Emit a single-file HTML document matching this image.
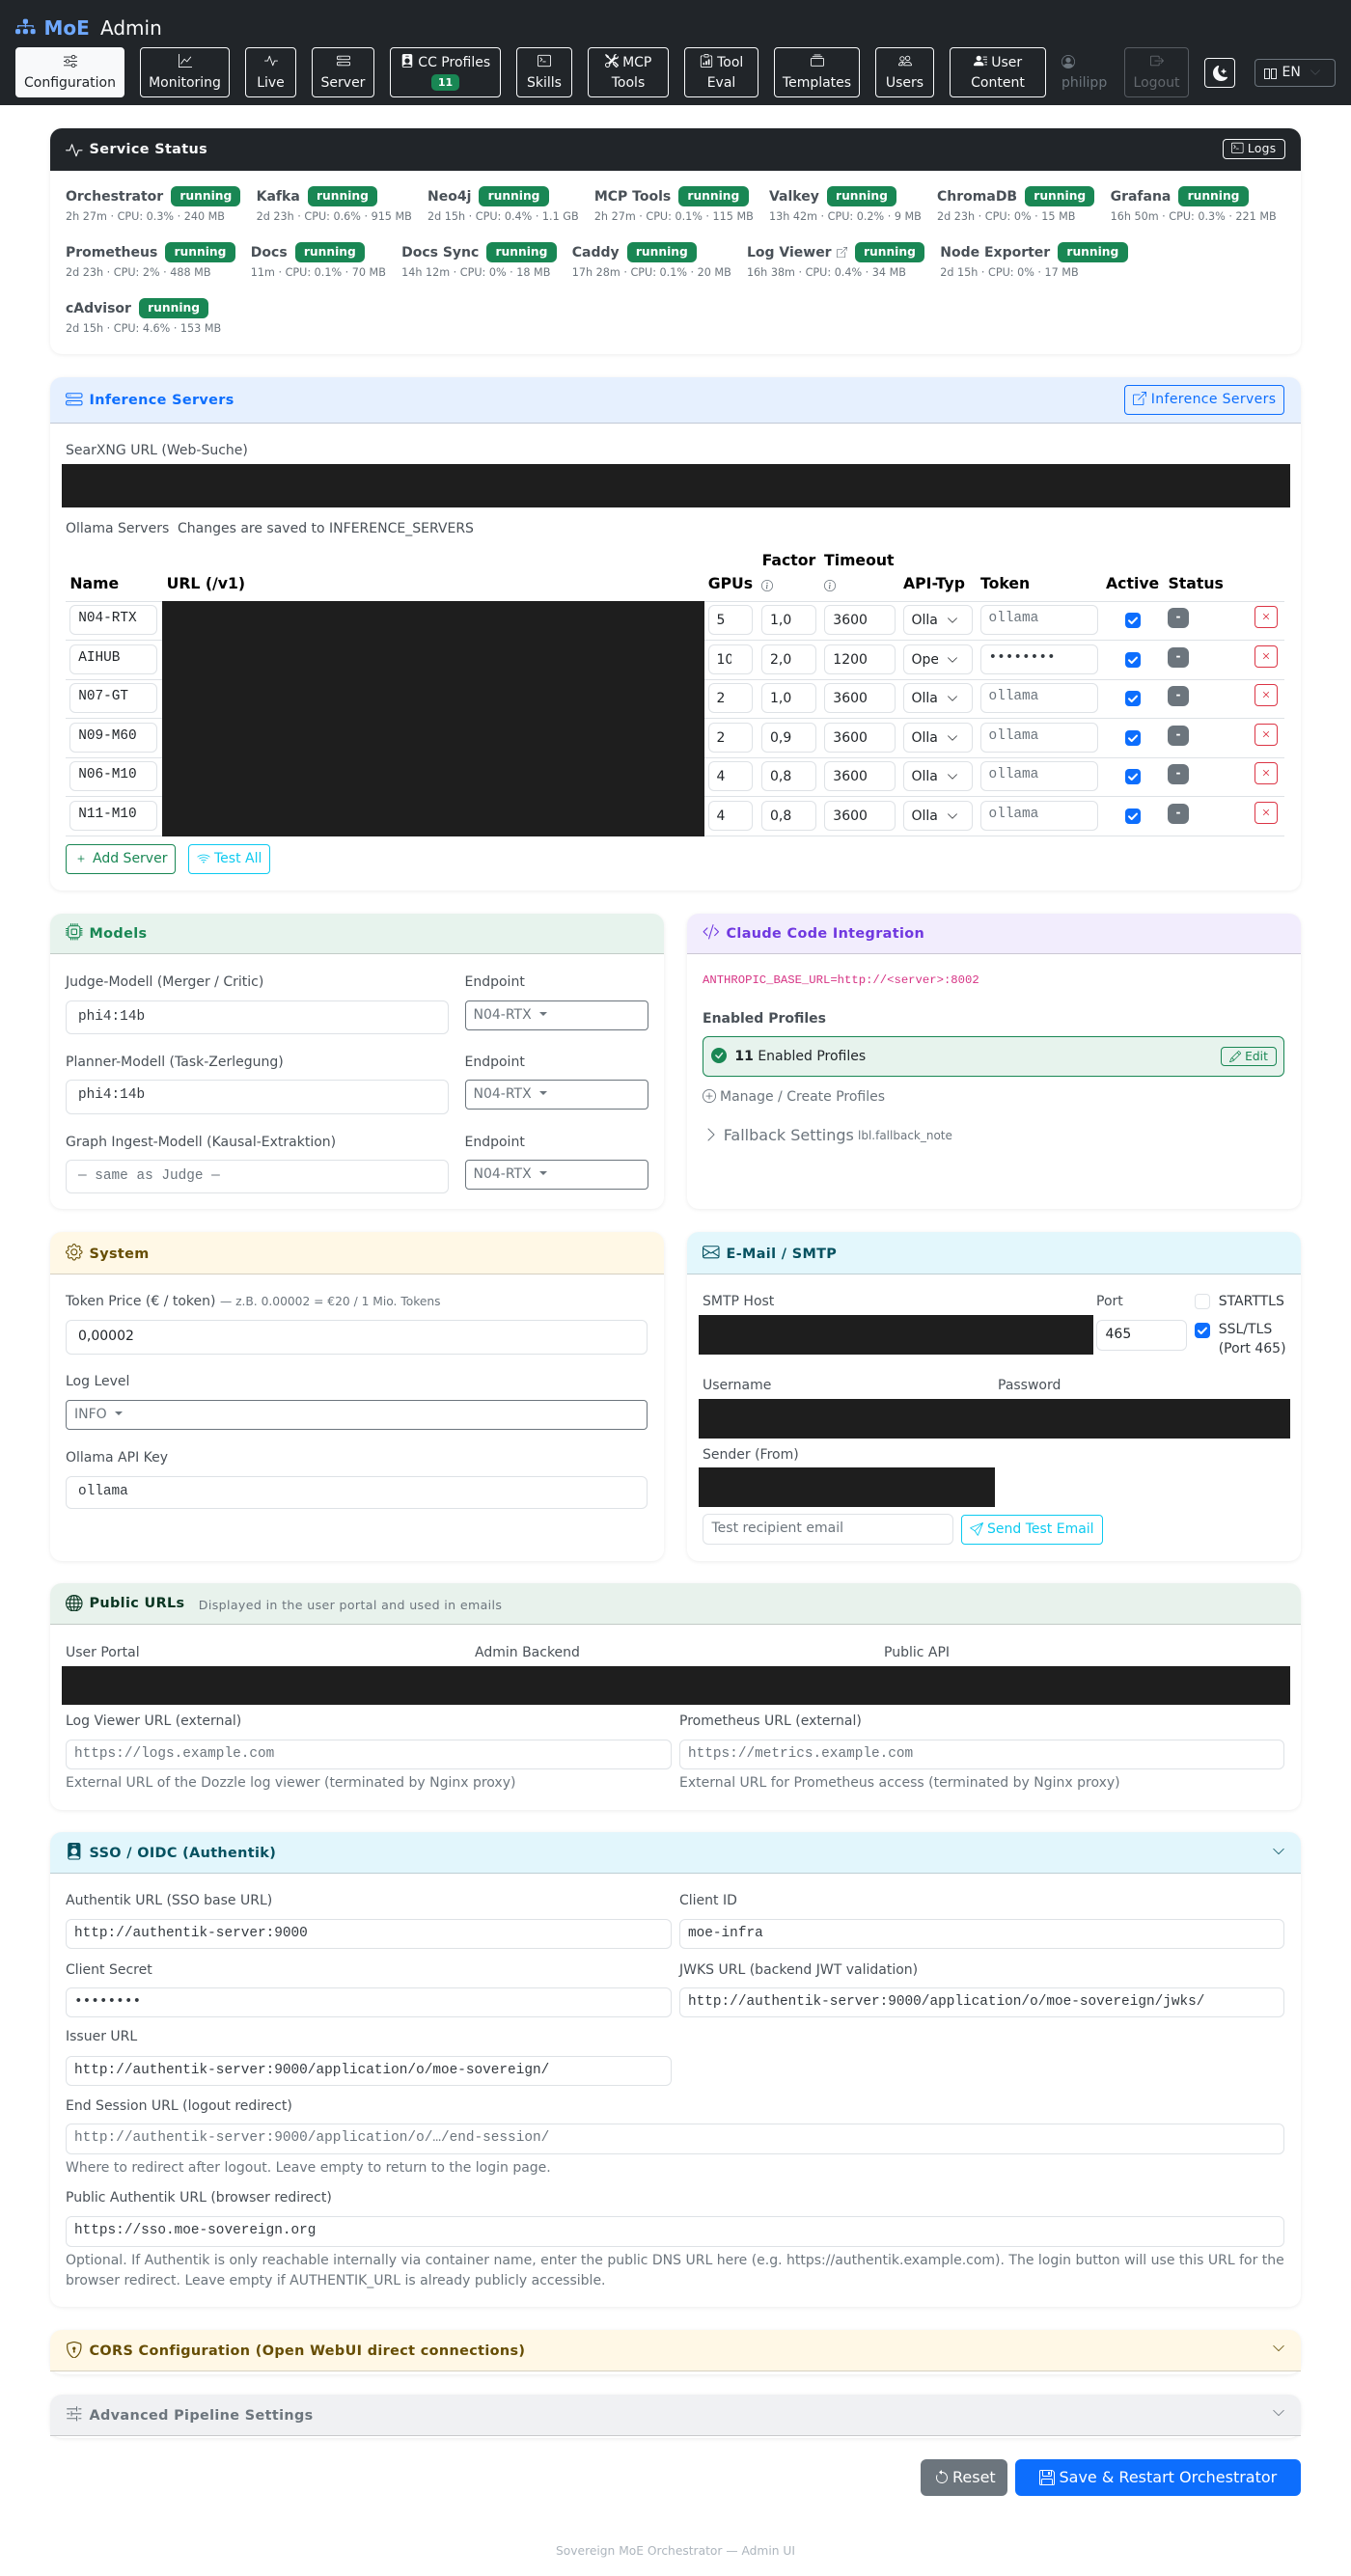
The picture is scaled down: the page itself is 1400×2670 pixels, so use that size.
<!DOCTYPE html>
<html lang="en"><head><meta charset="utf-8"><title>Sovereign MoE Admin</title>
<style>
*{box-sizing:border-box}
html,body{margin:0;padding:0;background:#fff}
body{position:relative;width:1400px;height:2670px;overflow:hidden;font-family:"DejaVu Sans",sans-serif;font-size:14px;color:#212529}
svg{fill:currentColor;display:inline-block;vertical-align:-2px}
.ab{position:absolute}
.t{position:absolute;white-space:nowrap;line-height:21px;color:#495057;margin-top:1px}
.t.h{margin-top:0}
.g{color:#6c757d}
nav{position:absolute;left:0;top:0;width:1400px;height:109px;background:#212529}
.nb{position:absolute;top:49px;height:52px;border:1px solid #f8f9fa;border-radius:4px;color:#f8f9fa;text-align:center;line-height:21px;padding:5px 0 0;white-space:nowrap}
.nb svg{vertical-align:-1px}
.nb.on{background:#f8f9fa;color:#212529}
.nb.off{border-color:#565b61;color:#63686e}
.nbg{display:inline-block;background:#198754;color:#fff;font-size:11px;font-weight:700;line-height:17px;height:17px;padding:0 6.5px;border-radius:5px;vertical-align:1px}
.card{position:absolute;background:#fff;border-radius:12px;box-shadow:0 1px 4px rgba(0,0,0,.08)}
.hd{position:absolute;left:0;right:0;top:0;border-radius:12px 12px 0 0;border-bottom:1px solid rgba(0,0,0,.16)}
.ct{position:absolute;white-space:nowrap;line-height:21px;font-size:14.4px;font-weight:700;letter-spacing:.36px}
.ti{position:absolute;width:17.6px;height:17.6px}
.ch{position:absolute;left:1318px;width:14px;height:14px}
.svc{position:absolute;left:68px;top:193px;width:1264px;display:flex;flex-wrap:wrap;column-gap:16.2px;row-gap:16px}
.it{height:42px}
.nm{display:flex;align-items:center;height:21px;white-space:nowrap;font-weight:700;color:#495057}
.nm svg{margin-left:5px}
.b{display:inline-block;background:#198754;color:#fff;font-weight:700;font-size:12.25px;line-height:21px;height:21px;padding:0 9.2px;border-radius:6px;margin-left:8px}
.sb{font-size:11.2px;line-height:17px;color:#6c757d;margin-top:2px;white-space:nowrap}
.i{position:absolute;background:#fff;border:1px solid #dee2e6;border-radius:6px;white-space:nowrap;overflow:hidden}
.m{font-family:"Liberation Mono",monospace;font-size:14.4px}
.dd{position:absolute;border:1px solid #6c757d;border-radius:4px;height:31px;color:#6c757d;line-height:29px;padding-left:8px;white-space:nowrap;background:#fff}
.dd:after{content:"";display:inline-block;margin-left:8px;vertical-align:3px;border-top:4.2px solid;border-left:4.2px solid transparent;border-right:4.2px solid transparent}
.th{position:absolute;white-space:nowrap;line-height:24px;font-size:15.7px;font-weight:700;color:#000}
.row{position:absolute;left:68px;width:1263px;height:41px;border-bottom:1px solid #dee2e6}
.row>.i{top:4px;height:31px;line-height:30px}
.c1{left:4.4px;width:91px;padding-left:7.8px;line-height:26px!important}
.c2{left:666px;width:46px;padding-left:7.5px}
.c2 span{display:inline-block;width:15px;overflow:hidden;vertical-align:top}
.c3{left:721px;width:57px;padding-left:8px}
.c4{left:786px;width:74px;padding-left:8.3px}
.c5{left:868px;width:72px;padding-left:7.5px}
.c5 span{display:inline-block;width:27px;overflow:hidden;vertical-align:top}
.c5 svg{position:absolute;left:44px;top:9px;width:12px;height:12px}
.c6{left:948px;width:122px;padding-left:7.5px;color:#6c757d;line-height:26px!important}
.cb{position:absolute;left:1098px;top:12px;width:16px;height:16px;background:#0d6efd;border-radius:4px}
.cb svg,.cb2 svg{position:absolute;left:0;top:0;width:16px;height:16px;fill:none}
.st{position:absolute;left:1142px;top:7px;width:22px;height:21px;background:#6c757d;color:#fff;border-radius:6px;text-align:center;font-size:12px;font-weight:700;line-height:19px}
.del{position:absolute;left:1232px;top:5px;width:24px;height:23px;border:1px solid #dc3545;border-radius:4px;color:#dc3545}
.del svg{position:absolute;left:4px;top:3px;width:14px;height:14px}
.blk{position:absolute;background:#1e1e1e}
.btn{position:absolute;border:1px solid;border-radius:4px;height:31px;line-height:29px;white-space:nowrap;background:#fff}
</style></head><body>

<svg style="display:none">
<symbol id="diagram" viewBox="0 0 16 16"><path d="M6 3.5A1.5 1.5 0 0 1 7.5 2h1A1.5 1.5 0 0 1 10 3.5v1A1.5 1.5 0 0 1 8.5 6v1H14a.5.5 0 0 1 .5.5v1a.5.5 0 0 1-1 0V8h-5v.5a.5.5 0 0 1-1 0V8h-5v.5a.5.5 0 0 1-1 0v-1A.5.5 0 0 1 2 7h5.5V6A1.5 1.5 0 0 1 6 4.5zm-6 8A1.5 1.5 0 0 1 1.5 10h1A1.5 1.5 0 0 1 4 11.5v1A1.5 1.5 0 0 1 2.5 14h-1A1.5 1.5 0 0 1 0 12.5zm6 0A1.5 1.5 0 0 1 7.5 10h1a1.5 1.5 0 0 1 1.5 1.5v1A1.5 1.5 0 0 1 8.5 14h-1A1.5 1.5 0 0 1 6 12.5zm6 0a1.5 1.5 0 0 1 1.5-1.5h1a1.5 1.5 0 0 1 1.5 1.5v1a1.5 1.5 0 0 1-1.5 1.5h-1a1.5 1.5 0 0 1-1.5-1.5z"/></symbol>
<symbol id="sliders" viewBox="0 0 16 16"><path fill-rule="evenodd" d="M11.5 2a1.5 1.5 0 1 0 0 3 1.5 1.5 0 0 0 0-3M9.05 3a2.5 2.5 0 0 1 4.9 0H16v1h-2.05a2.5 2.5 0 0 1-4.9 0H0V3zM4.5 7a1.5 1.5 0 1 0 0 3 1.5 1.5 0 0 0 0-3M2.05 8a2.5 2.5 0 0 1 4.9 0H16v1H6.95a2.5 2.5 0 0 1-4.9 0H0V8zm9.45 4a1.5 1.5 0 1 0 0 3 1.5 1.5 0 0 0 0-3m-2.45 1a2.5 2.5 0 0 1 4.9 0H16v1h-2.05a2.5 2.5 0 0 1-4.9 0H0v-1z"/></symbol>
<symbol id="graph" viewBox="0 0 16 16"><path fill-rule="evenodd" d="M0 0h1v15h15v1H0zm14.817 3.113a.5.5 0 0 1 .07.704l-4.5 5.5a.5.5 0 0 1-.74.037L7.06 6.767l-3.656 5.027a.5.5 0 0 1-.808-.588l4-5.5a.5.5 0 0 1 .758-.06l2.609 2.61 4.15-5.073a.5.5 0 0 1 .704-.07"/></symbol>
<symbol id="activity" viewBox="0 0 16 16"><path fill-rule="evenodd" d="M6 2a.5.5 0 0 1 .47.33L10 12.036l1.53-4.208A.5.5 0 0 1 12 7.5h3.5a.5.5 0 0 1 0 1h-3.15l-1.88 5.17a.5.5 0 0 1-.94 0L6 3.964 4.47 8.171A.5.5 0 0 1 4 8.5H.5a.5.5 0 0 1 0-1h3.15l1.88-5.17A.5.5 0 0 1 6 2"/></symbol>
<symbol id="hdd" viewBox="0 0 16 16"><path d="M14 10a1 1 0 0 1 1 1v1a1 1 0 0 1-1 1H2a1 1 0 0 1-1-1v-1a1 1 0 0 1 1-1zM2 9a2 2 0 0 0-2 2v1a2 2 0 0 0 2 2h12a2 2 0 0 0 2-2v-1a2 2 0 0 0-2-2z"/><path d="M5 11.5a.5.5 0 1 1-1 0 .5.5 0 0 1 1 0m-2 0a.5.5 0 1 1-1 0 .5.5 0 0 1 1 0M14 3a1 1 0 0 1 1 1v1a1 1 0 0 1-1 1H2a1 1 0 0 1-1-1V4a1 1 0 0 1 1-1zM2 2a2 2 0 0 0-2 2v1a2 2 0 0 0 2 2h12a2 2 0 0 0 2-2V4a2 2 0 0 0-2-2z"/><path d="M5 4.5a.5.5 0 1 1-1 0 .5.5 0 0 1 1 0m-2 0a.5.5 0 1 1-1 0 .5.5 0 0 1 1 0"/></symbol>
<symbol id="badge" viewBox="0 0 16 16"><path d="M2 2a2 2 0 0 1 2-2h8a2 2 0 0 1 2 2v12a2 2 0 0 1-2 2H4a2 2 0 0 1-2-2zm4.5 0a.5.5 0 0 0 0 1h3a.5.5 0 0 0 0-1zM8 11a3 3 0 1 0 0-6 3 3 0 0 0 0 6m5 2.755C12.146 12.825 10.623 12 8 12s-4.146.826-5 1.755V14a1 1 0 0 0 1 1h8a1 1 0 0 0 1-1z"/></symbol>
<symbol id="terminal" viewBox="0 0 16 16"><path d="M6 9a.5.5 0 0 1 .5-.5h3a.5.5 0 0 1 0 1h-3A.5.5 0 0 1 6 9M3.854 4.146a.5.5 0 1 0-.708.708L4.793 6.5 3.146 8.146a.5.5 0 1 0 .708.708l2-2a.5.5 0 0 0 0-.708z"/><path d="M2 1a2 2 0 0 0-2 2v10a2 2 0 0 0 2 2h12a2 2 0 0 0 2-2V3a2 2 0 0 0-2-2zm12 1a1 1 0 0 1 1 1v10a1 1 0 0 1-1 1H2a1 1 0 0 1-1-1V3a1 1 0 0 1 1-1z"/></symbol>
<symbol id="tools" viewBox="0 0 16 16"><path d="M1 0 0 1l2.2 3.081a1 1 0 0 0 .815.419h.07a1 1 0 0 1 .708.293l2.675 2.675-2.617 2.654A3.003 3.003 0 0 0 0 13a3 3 0 1 0 5.878-.851l2.654-2.617.968.968-.305.914a1 1 0 0 0 .242 1.023l3.27 3.27a.997.997 0 0 0 1.414 0l1.586-1.586a.997.997 0 0 0 0-1.414l-3.27-3.27a1 1 0 0 0-1.023-.242L10.5 9.5l-.96-.96 2.68-2.643A3.005 3.005 0 0 0 16 3q0-.405-.102-.777l-2.14 2.141L12 4l-.364-1.757L13.777.102a3 3 0 0 0-3.675 3.68L7.462 6.46 4.793 3.793a1 1 0 0 1-.293-.707v-.071a1 1 0 0 0-.419-.814zm9.646 10.646a.5.5 0 0 1 .708 0l2.914 2.915a.5.5 0 0 1-.707.707l-2.915-2.914a.5.5 0 0 1 0-.708M3 11l.471.242.529.026.287.445.445.287.026.529L5 13l-.242.471-.026.529-.445.287-.287.445-.529.026L3 15l-.471-.242L2 14.732l-.287-.445L1.268 14l-.026-.529L1 13l.242-.471.026-.529.445-.287.287-.445.529-.026z"/></symbol>
<symbol id="clip" viewBox="0 0 16 16"><path d="M4 11a1 1 0 1 1 2 0v1a1 1 0 1 1-2 0zm6-4a1 1 0 1 1 2 0v5a1 1 0 1 1-2 0zM7 9a1 1 0 0 1 2 0v3a1 1 0 1 1-2 0z"/><path d="M4 1.5H3a2 2 0 0 0-2 2V14a2 2 0 0 0 2 2h10a2 2 0 0 0 2-2V3.5a2 2 0 0 0-2-2h-1v1h1a1 1 0 0 1 1 1V14a1 1 0 0 1-1 1H3a1 1 0 0 1-1-1V3.5a1 1 0 0 1 1-1h1z"/><path d="M9.5 1a.5.5 0 0 1 .5.5v1a.5.5 0 0 1-.5.5h-3a.5.5 0 0 1-.5-.5v-1a.5.5 0 0 1 .5-.5zm-3-1A1.5 1.5 0 0 0 5 1.5v1A1.5 1.5 0 0 0 6.5 4h3A1.5 1.5 0 0 0 11 2.5v-1A1.5 1.5 0 0 0 9.5 0z"/></symbol>
<symbol id="coll" viewBox="0 0 16 16"><path d="M2.5 3.5a.5.5 0 0 1 0-1h11a.5.5 0 0 1 0 1zm2-2a.5.5 0 0 1 0-1h7a.5.5 0 0 1 0 1zM0 13a1.5 1.5 0 0 0 1.5 1.5h13A1.5 1.5 0 0 0 16 13V6a1.5 1.5 0 0 0-1.5-1.5h-13A1.5 1.5 0 0 0 0 6zm1.5.5A.5.5 0 0 1 1 13V6a.5.5 0 0 1 .5-.5h13a.5.5 0 0 1 .5.5v7a.5.5 0 0 1-.5.5z"/></symbol>
<symbol id="people" viewBox="0 0 16 16"><path d="M15 14s1 0 1-1-1-4-5-4-5 3-5 4 1 1 1 1zm-7.978-1L7 12.996c.001-.264.167-1.03.76-1.72C8.312 10.629 9.282 10 11 10c1.717 0 2.687.63 3.24 1.276.593.69.758 1.457.76 1.72l-.008.002-.014.002zM11 7a2 2 0 1 0 0-4 2 2 0 0 0 0 4m3-2a3 3 0 1 1-6 0 3 3 0 0 1 6 0M6.936 9.28a6 6 0 0 0-1.23-.247A7 7 0 0 0 5 9c-4 0-5 3-5 4q0 1 1 1h4.216A2.24 2.24 0 0 1 5 13c0-1.01.377-2.042 1.09-2.904.243-.294.526-.569.846-.816M4.92 10A5.5 5.5 0 0 0 4 13H1c0-.26.164-1.03.76-1.724.545-.636 1.492-1.256 3.16-1.275ZM1.5 5.5a3 3 0 1 1 6 0 3 3 0 0 1-6 0m3-2a2 2 0 1 0 0 4 2 2 0 0 0 0-4"/></symbol>
<symbol id="plines" viewBox="0 0 16 16"><path d="M6 8a3 3 0 1 0 0-6 3 3 0 0 0 0 6m-5 6s-1 0-1-1 1-4 6-4 6 3 6 4-1 1-1 1zM11 3.5a.5.5 0 0 1 .5-.5h4a.5.5 0 0 1 0 1h-4a.5.5 0 0 1-.5-.5m.5 2.5a.5.5 0 0 0 0 1h4a.5.5 0 0 0 0-1zm2 3a.5.5 0 0 0 0 1h2a.5.5 0 0 0 0-1zm0 3a.5.5 0 0 0 0 1h2a.5.5 0 0 0 0-1z"/></symbol>
<symbol id="pcircle" viewBox="0 0 16 16"><path d="M11 6a3 3 0 1 1-6 0 3 3 0 0 1 6 0"/><path fill-rule="evenodd" d="M0 8a8 8 0 1 1 16 0A8 8 0 0 1 0 8m8-7a7 7 0 0 0-5.468 11.37C3.242 11.226 4.805 10 8 10s4.757 1.225 5.468 2.37A7 7 0 0 0 8 1"/></symbol>
<symbol id="logout" viewBox="0 0 16 16"><path fill-rule="evenodd" d="M10 12.5a.5.5 0 0 1-.5.5h-8a.5.5 0 0 1-.5-.5v-9a.5.5 0 0 1 .5-.5h8a.5.5 0 0 1 .5.5v2a.5.5 0 0 0 1 0v-2A1.5 1.5 0 0 0 9.5 2h-8A1.5 1.5 0 0 0 0 3.5v9A1.5 1.5 0 0 0 1.5 14h8a1.5 1.5 0 0 0 1.5-1.5v-2a.5.5 0 0 0-1 0z"/><path fill-rule="evenodd" d="M15.854 8.354a.5.5 0 0 0 0-.708l-3-3a.5.5 0 0 0-.708.708L14.293 7.5H5.5a.5.5 0 0 0 0 1h8.793l-2.147 2.146a.5.5 0 0 0 .708.708z"/></symbol>
<symbol id="moon" viewBox="0 0 16 16"><path d="M6 .278a.77.77 0 0 1 .08.858 7.2 7.2 0 0 0-.878 3.46c0 4.021 3.278 7.277 7.318 7.277q.792-.001 1.533-.16a.79.79 0 0 1 .81.316.73.73 0 0 1-.031.893A8.35 8.35 0 0 1 8.344 16C3.734 16 0 12.286 0 7.71 0 4.266 2.114 1.312 5.124.06A.75.75 0 0 1 6 .278"/><path d="M10.794 3.148a.217.217 0 0 1 .412 0l.387 1.162c.173.518.579.924 1.097 1.097l1.162.387a.217.217 0 0 1 0 .412l-1.162.387a1.73 1.73 0 0 0-1.097 1.097l-.387 1.162a.217.217 0 0 1-.412 0l-.387-1.162A1.73 1.73 0 0 0 9.31 6.593l-1.162-.387a.217.217 0 0 1 0-.412l1.162-.387a1.73 1.73 0 0 0 1.097-1.097z"/></symbol>
<symbol id="ext" viewBox="0 0 16 16"><path fill-rule="evenodd" d="M8.636 3.5a.5.5 0 0 0-.5-.5H1.5A1.5 1.5 0 0 0 0 4.5v10A1.5 1.5 0 0 0 1.5 16h10a1.5 1.5 0 0 0 1.5-1.5V7.864a.5.5 0 0 0-1 0V14.5a.5.5 0 0 1-.5.5h-10a.5.5 0 0 1-.5-.5v-10a.5.5 0 0 1 .5-.5h6.636a.5.5 0 0 0 .5-.5"/><path fill-rule="evenodd" d="M16 .5a.5.5 0 0 0-.5-.5h-5a.5.5 0 0 0 0 1h3.793L6.146 9.146a.5.5 0 1 0 .708.708L15 1.707V5.5a.5.5 0 0 0 1 0z"/></symbol>
<symbol id="info" viewBox="0 0 16 16"><path d="M8 15A7 7 0 1 1 8 1a7 7 0 0 1 0 14m0 1A8 8 0 1 0 8 0a8 8 0 0 0 0 16"/><path d="m8.93 6.588-2.29.287-.082.38.45.083c.294.07.352.176.288.469l-.738 3.468c-.194.897.105 1.319.808 1.319.545 0 1.178-.252 1.465-.598l.088-.416c-.2.176-.492.246-.686.246-.275 0-.375-.193-.304-.533zM9 4.5a1 1 0 1 1-2 0 1 1 0 0 1 2 0"/></symbol>
<symbol id="x" viewBox="0 0 16 16"><path d="M4.646 4.646a.5.5 0 0 1 .708 0L8 7.293l2.646-2.647a.5.5 0 0 1 .708.708L8.707 8l2.647 2.646a.5.5 0 0 1-.708.708L8 8.707l-2.646 2.647a.5.5 0 0 1-.708-.708L7.293 8 4.646 5.354a.5.5 0 0 1 0-.708"/></symbol>
<symbol id="wifi" viewBox="0 0 16 16"><path d="M15.384 6.115a.485.485 0 0 0-.047-.736A12.44 12.44 0 0 0 8 3C5.259 3 2.723 3.882.663 5.379a.485.485 0 0 0-.048.736.52.52 0 0 0 .668.05A11.45 11.45 0 0 1 8 4c2.507 0 4.827.802 6.716 2.164.205.148.49.13.668-.049"/><path d="M13.229 8.271a.482.482 0 0 0-.063-.745A9.46 9.46 0 0 0 8 6c-1.905 0-3.68.56-5.166 1.526a.48.48 0 0 0-.063.745.525.525 0 0 0 .652.065A8.46 8.46 0 0 1 8 7a8.46 8.46 0 0 1 4.576 1.336c.206.132.48.108.653-.065m-2.183 2.183c.226-.226.185-.605-.1-.75A6.5 6.5 0 0 0 8 9c-1.06 0-2.062.254-2.946.704-.285.145-.326.524-.1.75l.015.015c.16.16.407.19.611.09A5.5 5.5 0 0 1 8 10c.868 0 1.69.201 2.42.56.203.1.45.07.61-.091zM9.06 12.44c.196-.196.198-.52-.04-.66A2 2 0 0 0 8 11.5a2 2 0 0 0-1.02.28c-.238.14-.236.464-.04.66l.706.706a.5.5 0 0 0 .707 0l.707-.707z"/></symbol>
<symbol id="cpu" viewBox="0 0 16 16"><path d="M5 0a.5.5 0 0 1 .5.5V2h1V.5a.5.5 0 0 1 1 0V2h1V.5a.5.5 0 0 1 1 0V2h1V.5a.5.5 0 0 1 1 0V2A2.5 2.5 0 0 1 14 4.5h1.5a.5.5 0 0 1 0 1H14v1h1.5a.5.5 0 0 1 0 1H14v1h1.5a.5.5 0 0 1 0 1H14v1h1.5a.5.5 0 0 1 0 1H14a2.5 2.5 0 0 1-2.5 2.5v1.5a.5.5 0 0 1-1 0V14h-1v1.5a.5.5 0 0 1-1 0V14h-1v1.5a.5.5 0 0 1-1 0V14h-1v1.5a.5.5 0 0 1-1 0V14A2.5 2.5 0 0 1 2 11.5H.5a.5.5 0 0 1 0-1H2v-1H.5a.5.5 0 0 1 0-1H2v-1H.5a.5.5 0 0 1 0-1H2v-1H.5a.5.5 0 0 1 0-1H2A2.5 2.5 0 0 1 4.5 2V.5A.5.5 0 0 1 5 0m-.5 3A1.5 1.5 0 0 0 3 4.5v7A1.5 1.5 0 0 0 4.5 13h7a1.5 1.5 0 0 0 1.5-1.5v-7A1.5 1.5 0 0 0 11.5 3zM5 6.5A1.5 1.5 0 0 1 6.5 5h3A1.5 1.5 0 0 1 11 6.5v3A1.5 1.5 0 0 1 9.5 11h-3A1.5 1.5 0 0 1 5 9.5zM6.5 6a.5.5 0 0 0-.5.5v3a.5.5 0 0 0 .5.5h3a.5.5 0 0 0 .5-.5v-3a.5.5 0 0 0-.5-.5z"/></symbol>
<symbol id="code" viewBox="0 0 16 16"><path d="M10.478 1.647a.5.5 0 1 0-.956-.294l-4 13a.5.5 0 0 0 .956.294zM4.854 4.146a.5.5 0 0 1 0 .708L1.707 8l3.147 3.146a.5.5 0 0 1-.708.708l-3.5-3.5a.5.5 0 0 1 0-.708l3.5-3.5a.5.5 0 0 1 .708 0m6.292 0a.5.5 0 0 0 0 .708L14.293 8l-3.147 3.146a.5.5 0 0 0 .708.708l3.5-3.5a.5.5 0 0 0 0-.708l-3.5-3.5a.5.5 0 0 0-.708 0"/></symbol>
<symbol id="gear" viewBox="0 0 16 16"><path d="M8 4.754a3.246 3.246 0 1 0 0 6.492 3.246 3.246 0 0 0 0-6.492M5.754 8a2.246 2.246 0 1 1 4.492 0 2.246 2.246 0 0 1-4.492 0"/><path d="M9.796 1.343c-.527-1.79-3.065-1.79-3.592 0l-.094.319a.873.873 0 0 1-1.255.52l-.292-.16c-1.64-.892-3.433.902-2.54 2.541l.159.292a.873.873 0 0 1-.52 1.255l-.319.094c-1.79.527-1.79 3.065 0 3.592l.319.094a.873.873 0 0 1 .52 1.255l-.16.292c-.892 1.64.901 3.434 2.541 2.54l.292-.159a.873.873 0 0 1 1.255.52l.094.319c.527 1.79 3.065 1.79 3.592 0l.094-.319a.873.873 0 0 1 1.255-.52l.292.16c1.64.893 3.434-.902 2.54-2.541l-.159-.292a.873.873 0 0 1 .52-1.255l.319-.094c1.79-.527 1.79-3.065 0-3.592l-.319-.094a.873.873 0 0 1-.52-1.255l.16-.292c.893-1.64-.902-3.433-2.541-2.54l-.292.159a.873.873 0 0 1-1.255-.52zm-2.633.283c.246-.835 1.428-.835 1.674 0l.094.319a1.873 1.873 0 0 0 2.693 1.115l.291-.16c.764-.415 1.6.42 1.184 1.185l-.159.292a1.873 1.873 0 0 0 1.116 2.692l.318.094c.835.246.835 1.428 0 1.674l-.319.094a1.873 1.873 0 0 0-1.115 2.693l.16.291c.415.764-.42 1.6-1.185 1.184l-.291-.159a1.873 1.873 0 0 0-2.693 1.116l-.094.318c-.246.835-1.428.835-1.674 0l-.094-.319a1.873 1.873 0 0 0-2.692-1.115l-.292.16c-.764.415-1.6-.42-1.184-1.185l.159-.291A1.873 1.873 0 0 0 1.945 8.93l-.319-.094c-.835-.246-.835-1.428 0-1.674l.319-.094A1.873 1.873 0 0 0 3.06 4.377l-.16-.292c-.415-.764.42-1.6 1.185-1.184l.292.159a1.873 1.873 0 0 0 2.692-1.115z"/></symbol>
<symbol id="env" viewBox="0 0 16 16"><path d="M0 4a2 2 0 0 1 2-2h12a2 2 0 0 1 2 2v8a2 2 0 0 1-2 2H2a2 2 0 0 1-2-2zm2-1a1 1 0 0 0-1 1v.217l7 4.2 7-4.2V4a1 1 0 0 0-1-1zm13 2.383-4.708 2.825L15 11.105zm-.034 6.876-5.64-3.471L8 9.583l-1.326-.795-5.64 3.47A1 1 0 0 0 2 13h12a1 1 0 0 0 .966-.741M1 11.105l4.708-2.897L1 5.383z"/></symbol>
<symbol id="globe" viewBox="0 0 16 16"><path d="M0 8a8 8 0 1 1 16 0A8 8 0 0 1 0 8m7.5-6.923c-.67.204-1.335.82-1.887 1.855A8 8 0 0 0 5.145 4H7.5zM4.09 4a9.3 9.3 0 0 1 .64-1.539 7 7 0 0 1 .597-.933A7.03 7.03 0 0 0 2.255 4zm-.582 3.5c.03-.877.138-1.718.312-2.5H1.674a7 7 0 0 0-.656 2.5zM4.847 5a12.5 12.5 0 0 0-.338 2.5H7.5V5zM8.5 5v2.5h2.99a12.5 12.5 0 0 0-.337-2.5zM4.51 8.5a12.5 12.5 0 0 0 .337 2.5H7.5V8.5zm3.99 0V11h2.653c.187-.765.306-1.608.338-2.5zM5.145 12q.208.58.468 1.068c.552 1.035 1.218 1.65 1.887 1.855V12zm.182 2.472a7 7 0 0 1-.597-.933A9.3 9.3 0 0 1 4.09 12H2.255a7 7 0 0 0 3.072 2.472M3.82 11a13.7 13.7 0 0 1-.312-2.5h-2.49c.062.89.291 1.733.656 2.5zm6.853 3.472A7 7 0 0 0 13.745 12H11.91a9.3 9.3 0 0 1-.64 1.539 7 7 0 0 1-.597.933M8.5 12v2.923c.67-.204 1.335-.82 1.887-1.855q.26-.487.468-1.068zm3.68-1h2.146c.365-.767.594-1.61.656-2.5h-2.49a13.7 13.7 0 0 1-.312 2.5m2.802-3.5a7 7 0 0 0-.656-2.5H12.18c.174.782.282 1.623.312 2.5zM11.27 2.461c.247.464.462.98.64 1.539h1.835a7 7 0 0 0-3.072-2.472c.218.284.418.598.597.933M10.855 4a8 8 0 0 0-.468-1.068C9.835 1.897 9.17 1.282 8.5 1.077V4z"/></symbol>
<symbol id="shield" viewBox="0 0 16 16"><path d="M5.338 1.59a61 61 0 0 0-2.837.856.48.48 0 0 0-.328.39c-.554 4.157.726 7.19 2.253 9.188a10.7 10.7 0 0 0 2.287 2.233c.346.244.652.42.893.533q.18.085.293.118a1 1 0 0 0 .101.025 1 1 0 0 0 .1-.025q.114-.034.294-.118c.24-.113.547-.29.893-.533a10.7 10.7 0 0 0 2.287-2.233c1.527-1.997 2.807-5.031 2.253-9.188a.48.48 0 0 0-.328-.39c-.651-.213-1.75-.56-2.837-.855C9.552 1.29 8.531 1.067 8 1.067c-.53 0-1.552.223-2.662.524zM5.072.56C6.157.265 7.31 0 8 0s1.843.265 2.928.56c1.11.3 2.229.655 2.887.87a1.54 1.54 0 0 1 1.044 1.262c.596 4.477-.787 7.795-2.465 9.99a11.8 11.8 0 0 1-2.517 2.453 7 7 0 0 1-1.048.625c-.28.132-.581.24-.829.24s-.548-.108-.829-.24a7 7 0 0 1-1.048-.625 11.8 11.8 0 0 1-2.517-2.453C1.928 10.487.545 7.169 1.141 2.692A1.54 1.54 0 0 1 2.185 1.43 63 63 0 0 1 5.072.56"/><path d="M9.5 6.5a1.5 1.5 0 0 1-1 1.415l.385 1.99a.5.5 0 0 1-.491.595h-.788a.5.5 0 0 1-.49-.595l.384-1.99a1.5 1.5 0 1 1 2-1.415"/></symbol>
<symbol id="sl2" viewBox="0 0 16 16"><path d="M10.5 1a.5.5 0 0 1 .5.5v4a.5.5 0 0 1-1 0V4H1.5a.5.5 0 0 1 0-1H10V1.5a.5.5 0 0 1 .5-.5M12 3.5a.5.5 0 0 1 .5-.5h2a.5.5 0 0 1 0 1h-2a.5.5 0 0 1-.5-.5m-6.5 2A.5.5 0 0 1 6 6v1.5h8.5a.5.5 0 0 1 0 1H6V10a.5.5 0 0 1-1 0V6a.5.5 0 0 1 .5-.5M1 8a.5.5 0 0 1 .5-.5h2a.5.5 0 0 1 0 1h-2A.5.5 0 0 1 1 8m9.5 2a.5.5 0 0 1 .5.5v4a.5.5 0 0 1-1 0V13H1.5a.5.5 0 0 1 0-1H10v-1.5a.5.5 0 0 1 .5-.5m1.5 2.5a.5.5 0 0 1 .5-.5h2a.5.5 0 0 1 0 1h-2a.5.5 0 0 1-.5-.5"/></symbol>
<symbol id="pencil" viewBox="0 0 16 16"><path d="M12.146.146a.5.5 0 0 1 .708 0l3 3a.5.5 0 0 1 0 .708l-10 10a.5.5 0 0 1-.168.11l-5 2a.5.5 0 0 1-.65-.65l2-5a.5.5 0 0 1 .11-.168zM11.207 2.5 13.5 4.793 14.793 3.5 12.5 1.207zm1.586 3L10.5 3.207 4 9.707V10h.5a.5.5 0 0 1 .5.5v.5h.5a.5.5 0 0 1 .5.5v.5h.293zm-9.761 5.175-.106.106-1.528 3.821 3.821-1.528.106-.106A.5.5 0 0 1 5 12.5V12h-.5a.5.5 0 0 1-.5-.5V11h-.5a.5.5 0 0 1-.468-.325"/></symbol>
<symbol id="check" viewBox="0 0 16 16"><path d="M16 8A8 8 0 1 1 0 8a8 8 0 0 1 16 0m-3.97-3.03a.75.75 0 0 0-1.08.022L7.477 9.417 5.384 7.323a.75.75 0 0 0-1.06 1.06L6.97 11.03a.75.75 0 0 0 1.079-.02l3.992-4.99a.75.75 0 0 0-.01-1.05z"/></symbol>
<symbol id="plusc" viewBox="0 0 16 16"><path d="M8 15A7 7 0 1 1 8 1a7 7 0 0 1 0 14m0 1A8 8 0 1 0 8 0a8 8 0 0 0 0 16"/><path d="M8 4a.5.5 0 0 1 .5.5v3h3a.5.5 0 0 1 0 1h-3v3a.5.5 0 0 1-1 0v-3h-3a.5.5 0 0 1 0-1h3v-3A.5.5 0 0 1 8 4"/></symbol>
<symbol id="plus" viewBox="0 0 16 16"><path d="M8 4a.5.5 0 0 1 .5.5v3h3a.5.5 0 0 1 0 1h-3v3a.5.5 0 0 1-1 0v-3h-3a.5.5 0 0 1 0-1h3v-3A.5.5 0 0 1 8 4"/></symbol>
<symbol id="chevd" viewBox="0 0 16 16"><path fill-rule="evenodd" d="M1.646 4.646a.5.5 0 0 1 .708 0L8 10.293l5.646-5.647a.5.5 0 0 1 .708.708l-6 6a.5.5 0 0 1-.708 0l-6-6a.5.5 0 0 1 0-.708"/></symbol>
<symbol id="chevr" viewBox="0 0 16 16"><path fill-rule="evenodd" d="M4.646 1.646a.5.5 0 0 1 .708 0l6 6a.5.5 0 0 1 0 .708l-6 6a.5.5 0 0 1-.708-.708L10.293 8 4.646 2.354a.5.5 0 0 1 0-.708"/></symbol>
<symbol id="send" viewBox="0 0 16 16"><path d="M15.854.146a.5.5 0 0 1 .11.54l-5.819 14.547a.75.75 0 0 1-1.329.124l-3.178-4.995L.643 7.184a.75.75 0 0 1 .124-1.33L15.314.037a.5.5 0 0 1 .54.11ZM6.636 10.07l2.761 4.338L14.13 2.576zm6.787-8.201L1.591 6.602l4.339 2.76z"/></symbol>
<symbol id="reset" viewBox="0 0 16 16"><path fill-rule="evenodd" d="M8 3a5 5 0 1 1-4.546 2.914.5.5 0 0 0-.908-.417A6 6 0 1 0 8 2z"/><path d="M8 4.466V.534a.25.25 0 0 0-.41-.192L5.23 2.308a.25.25 0 0 0 0 .384l2.36 1.966A.25.25 0 0 0 8 4.466"/></symbol>
<symbol id="floppy" viewBox="0 0 16 16"><path d="M11 2H9v3h2z"/><path d="M1.5 0h11.586a1.5 1.5 0 0 1 1.06.44l1.415 1.414A1.5 1.5 0 0 1 16 2.914V14.5a1.5 1.5 0 0 1-1.5 1.5h-13A1.5 1.5 0 0 1 0 14.5v-13A1.5 1.5 0 0 1 1.5 0M1 1.5v13a.5.5 0 0 0 .5.5H2v-4.5A1.5 1.5 0 0 1 3.5 9h9a1.5 1.5 0 0 1 1.5 1.5V15h.5a.5.5 0 0 0 .5-.5V2.914a.5.5 0 0 0-.146-.353l-1.415-1.415A.5.5 0 0 0 13.086 1H13v4.5A1.5 1.5 0 0 1 11.5 7h-7A1.5 1.5 0 0 1 3 5.5V1H1.5a.5.5 0 0 0-.5.5m3 4a.5.5 0 0 0 .5.5h7a.5.5 0 0 0 .5-.5V1H4zM3 15h10v-4.5a.5.5 0 0 0-.5-.5h-9a.5.5 0 0 0-.5.5z"/></symbol>
<symbol id="tick" viewBox="0 0 16 16"><path d="M4 8.3l2.7 2.7L12 5.6" fill="none" stroke="#fff" stroke-width="2" stroke-linecap="round" stroke-linejoin="round"/></symbol>
</svg>

<nav>
<svg class="ab" style="left:16px;top:17.4px;color:#6ea8fe" width="20.8" height="20.8"><use href="#diagram"/></svg>
<div class="t h" style="left:45.5px;top:14px;font-size:20px;line-height:30px;font-weight:700;color:#6ea8fe">MoE</div>
<div class="t h" style="left:104px;top:14px;font-size:20px;line-height:30px;color:#f8f9fa">Admin</div>

<div class="nb on" style="left:16px;width:113px"><svg width="14" height="14"><use href="#sliders"/></svg><br>Configuration</div>
<div class="nb" style="left:145px;width:93px"><svg width="14" height="14"><use href="#graph"/></svg><br>Monitoring</div>
<div class="nb" style="left:254px;width:53px"><svg width="14" height="14"><use href="#activity"/></svg><br>Live</div>
<div class="nb" style="left:323px;width:65px"><svg width="14" height="14"><use href="#hdd"/></svg><br>Server</div>
<div class="nb" style="left:404px;width:115px"><svg width="14" height="14"><use href="#badge"/></svg> CC Profiles<br><span class="nbg">11</span></div>
<div class="nb" style="left:535px;width:58px"><svg width="14" height="14"><use href="#terminal"/></svg><br>Skills</div>
<div class="nb" style="left:609px;width:84px"><svg width="14" height="14"><use href="#tools"/></svg> MCP<br>Tools</div>
<div class="nb" style="left:709px;width:77px"><svg width="14" height="14"><use href="#clip"/></svg> Tool<br>Eval</div>
<div class="nb" style="left:802px;width:89px"><svg width="14" height="14"><use href="#coll"/></svg><br>Templates</div>
<div class="nb" style="left:907px;width:61px"><svg width="14" height="14"><use href="#people"/></svg><br>Users</div>
<div class="nb" style="left:984px;width:100px"><svg width="14" height="14"><use href="#plines"/></svg> User<br>Content</div>
<svg class="ab" style="left:1099.5px;top:57px;color:#6c757d" width="14" height="14"><use href="#pcircle"/></svg>
<div class="t" style="left:1100px;top:75px;color:#6c757d">philipp</div>
<div class="nb off" style="left:1165px;width:67px"><svg width="14" height="14"><use href="#logout"/></svg><br>Logout</div>
<div class="nb" style="left:1248px;width:32px;top:60px;height:31px"><svg style="position:absolute;left:8px;top:7px" width="16" height="16"><use href="#moon"/></svg></div>
<div class="ab" style="left:1300px;top:61px;width:84px;height:29px;border:1px solid #6c757d;border-radius:4px"></div>
<div class="ab" style="left:1310px;top:71px;width:6px;height:11px;border:1px solid #e9ecef"></div>
<div class="ab" style="left:1317px;top:71px;width:6px;height:11px;border:1px solid #e9ecef"></div>
<div class="t h" style="left:1328.5px;top:65px;color:#f1f3f5;line-height:21px;font-size:14px">EN</div>
<svg class="ab" style="left:1357px;top:69px;color:#495057" width="12" height="12"><use href="#chevd"/></svg>
</nav>

<!-- Service Status -->
<div class="card" style="left:52px;top:133px;width:1296px;height:234px"><div class="hd" style="height:44px;background:#212529;border:0"></div></div>
<svg class="ti" style="left:68px;top:146.5px;color:#f8f9fa"><use href="#activity"/></svg>
<div class="ct" style="left:92.5px;top:144.5px;color:#f8f9fa">Service Status</div>
<div class="ab" style="left:1267px;top:144px;width:65px;height:21px;border:1px solid #f8f9fa;border-radius:4px;color:#f8f9fa;font-size:12.25px;letter-spacing:.36px;line-height:18px;white-space:nowrap;padding-left:8px"><svg width="12.6" height="12.6"><use href="#terminal"/></svg> Logs</div>
<div class="svc">
<div class="it"><div class="nm">Orchestrator<span class="b">running</span></div><div class="sb">2h 27m · CPU: 0.3% · 240 MB</div></div>
<div class="it"><div class="nm">Kafka<span class="b">running</span></div><div class="sb">2d 23h · CPU: 0.6% · 915 MB</div></div>
<div class="it"><div class="nm">Neo4j<span class="b">running</span></div><div class="sb">2d 15h · CPU: 0.4% · 1.1 GB</div></div>
<div class="it"><div class="nm">MCP Tools<span class="b">running</span></div><div class="sb">2h 27m · CPU: 0.1% · 115 MB</div></div>
<div class="it"><div class="nm">Valkey<span class="b">running</span></div><div class="sb">13h 42m · CPU: 0.2% · 9 MB</div></div>
<div class="it"><div class="nm">ChromaDB<span class="b">running</span></div><div class="sb">2d 23h · CPU: 0% · 15 MB</div></div>
<div class="it"><div class="nm">Grafana<span class="b">running</span></div><div class="sb">16h 50m · CPU: 0.3% · 221 MB</div></div>
<div class="it"><div class="nm">Prometheus<span class="b">running</span></div><div class="sb">2d 23h · CPU: 2% · 488 MB</div></div>
<div class="it"><div class="nm">Docs<span class="b">running</span></div><div class="sb">11m · CPU: 0.1% · 70 MB</div></div>
<div class="it"><div class="nm">Docs Sync<span class="b">running</span></div><div class="sb">14h 12m · CPU: 0% · 18 MB</div></div>
<div class="it"><div class="nm">Caddy<span class="b">running</span></div><div class="sb">17h 28m · CPU: 0.1% · 20 MB</div></div>
<div class="it"><div class="nm">Log Viewer<svg width="11.2" height="11.2" style="color:#6c757d"><use href="#ext"/></svg><span class="b">running</span></div><div class="sb">16h 38m · CPU: 0.4% · 34 MB</div></div>
<div class="it"><div class="nm">Node Exporter<span class="b">running</span></div><div class="sb">2d 15h · CPU: 0% · 17 MB</div></div>
<div class="it"><div class="nm">cAdvisor<span class="b">running</span></div><div class="sb">2d 15h · CPU: 4.6% · 153 MB</div></div>
</div>

<!-- Inference Servers -->
<div class="card" style="left:52px;top:391px;width:1296px;height:531.5px"><div class="hd" style="height:48px;background:#e6f0fe"></div></div>
<svg class="ti" style="left:68px;top:404.6px;color:#0d6efd"><use href="#hdd"/></svg>
<div class="ct" style="left:92.5px;top:405.3px;color:#0d6efd">Inference Servers</div>
<div class="btn" style="left:1165px;top:399px;width:166px;border-color:#0d6efd;color:#0d6efd;background:transparent;padding-left:8px;letter-spacing:.36px"><svg width="14" height="14"><use href="#ext"/></svg> Inference Servers</div>
<div class="t" style="left:68px;top:456px">SearXNG URL (Web-Suche)</div>
<div class="blk" style="left:64px;top:481px;width:1273px;height:45px"></div>
<div class="t" style="left:68px;top:536.5px">Ollama Servers</div>
<div class="t" style="left:184px;top:536.5px">Changes are saved to INFERENCE_SERVERS</div>

<div class="th" style="left:72.4px;top:593px">Name</div>
<div class="th" style="left:172.6px;top:593px">URL (/v1)</div>
<div class="th" style="left:733.7px;top:593px">GPUs</div>
<div class="th" style="left:789.6px;top:569px">Factor</div>
<div class="th" style="left:854px;top:569px">Timeout</div>
<svg class="ab g" style="left:789px;top:600.6px" width="12" height="12"><use href="#info"/></svg>
<svg class="ab g" style="left:854px;top:600.6px" width="12" height="12"><use href="#info"/></svg>
<div class="th" style="left:936px;top:593px">API-Typ</div>
<div class="th" style="left:1016px;top:593px">Token</div>
<div class="th" style="left:1146px;top:593px">Active</div>
<div class="th" style="left:1210.5px;top:593px">Status</div>
<div class="ab" style="left:68px;top:622.5px;width:1263px;height:1px;background:#dee2e6"></div>

<div class="row" style="top:623px"><div class="i m c1">N04-RTX</div><div class="i c2"><span>5</span></div><div class="i c3">1,0</div><div class="i c4">3600</div><div class="i c5"><span>Ollama</span><svg><use href="#chevd"/></svg></div><div class="i m c6">ollama</div><div class="cb"><svg><use href="#tick"/></svg></div><div class="st">-</div><div class="del"><svg><use href="#x"/></svg></div></div>
<div class="row" style="top:663.6px"><div class="i m c1">AIHUB</div><div class="i c2"><span>10</span></div><div class="i c3">2,0</div><div class="i c4">1200</div><div class="i c5"><span>OpenAI</span><svg><use href="#chevd"/></svg></div><div class="i m c6" style="color:#343a40">••••••••</div><div class="cb"><svg><use href="#tick"/></svg></div><div class="st">-</div><div class="del"><svg><use href="#x"/></svg></div></div>
<div class="row" style="top:704.2px"><div class="i m c1">N07-GT</div><div class="i c2"><span>2</span></div><div class="i c3">1,0</div><div class="i c4">3600</div><div class="i c5"><span>Ollama</span><svg><use href="#chevd"/></svg></div><div class="i m c6">ollama</div><div class="cb"><svg><use href="#tick"/></svg></div><div class="st">-</div><div class="del"><svg><use href="#x"/></svg></div></div>
<div class="row" style="top:744.8px"><div class="i m c1">N09-M60</div><div class="i c2"><span>2</span></div><div class="i c3">0,9</div><div class="i c4">3600</div><div class="i c5"><span>Ollama</span><svg><use href="#chevd"/></svg></div><div class="i m c6">ollama</div><div class="cb"><svg><use href="#tick"/></svg></div><div class="st">-</div><div class="del"><svg><use href="#x"/></svg></div></div>
<div class="row" style="top:785.4px"><div class="i m c1">N06-M10</div><div class="i c2"><span>4</span></div><div class="i c3">0,8</div><div class="i c4">3600</div><div class="i c5"><span>Ollama</span><svg><use href="#chevd"/></svg></div><div class="i m c6">ollama</div><div class="cb"><svg><use href="#tick"/></svg></div><div class="st">-</div><div class="del"><svg><use href="#x"/></svg></div></div>
<div class="row" style="top:826px"><div class="i m c1">N11-M10</div><div class="i c2"><span>4</span></div><div class="i c3">0,8</div><div class="i c4">3600</div><div class="i c5"><span>Ollama</span><svg><use href="#chevd"/></svg></div><div class="i m c6">ollama</div><div class="cb"><svg><use href="#tick"/></svg></div><div class="st">-</div><div class="del"><svg><use href="#x"/></svg></div></div>
<div class="blk" style="left:168px;top:623px;width:562px;height:244px"></div>

<div class="btn" style="left:68px;top:875px;width:114px;border-color:#198754;color:#198754"><svg class="ab" style="left:8px;top:7px" width="14" height="14"><use href="#plus"/></svg><span class="ab" style="left:27px;top:0">Add Server</span></div>
<div class="btn" style="left:195px;top:875px;width:85px;border-color:#0dcaf0;color:#0dcaf0"><svg class="ab" style="left:8px;top:7px" width="14" height="14"><use href="#wifi"/></svg><span class="ab" style="left:26px;top:0">Test All</span></div>

<!-- Models -->
<div class="card" style="left:52px;top:946.5px;width:636px;height:306.5px"><div class="hd" style="height:42px;background:#e7f3ed"></div></div>
<svg class="ti" style="left:68px;top:957.2px;color:#198754"><use href="#cpu"/></svg>
<div class="ct" style="left:92.5px;top:958px;color:#198754">Models</div>
<div class="t" style="left:68px;top:1006.5px">Judge-Modell (Merger / Critic)</div>
<div class="t" style="left:481.5px;top:1006.5px">Endpoint</div>
<div class="i m" style="left:68px;top:1037px;width:397px;height:35px;line-height:32px;padding-left:12px;color:#343a40">phi4:14b</div>
<div class="dd" style="left:481.5px;top:1037px;width:190px">N04-RTX</div>
<div class="t" style="left:68px;top:1089.5px">Planner-Modell (Task-Zerlegung)</div>
<div class="t" style="left:481.5px;top:1089.5px">Endpoint</div>
<div class="i m" style="left:68px;top:1119px;width:397px;height:35.5px;line-height:31px;padding-left:12px;color:#343a40">phi4:14b</div>
<div class="dd" style="left:481.5px;top:1119px;width:190px">N04-RTX</div>
<div class="t" style="left:68px;top:1172.5px">Graph Ingest-Modell (Kausal-Extraktion)</div>
<div class="t" style="left:481.5px;top:1172.5px">Endpoint</div>
<div class="i m g" style="left:68px;top:1202px;width:397px;height:35px;line-height:33px;padding-left:12px">— same as Judge —</div>
<div class="dd" style="left:481.5px;top:1202px;width:190px">N04-RTX</div>

<!-- Claude -->
<div class="card" style="left:712px;top:946.5px;width:636px;height:306.5px"><div class="hd" style="height:42px;background:#f2edfd"></div></div>
<svg class="ti" style="left:728px;top:957.2px;color:#7038e0"><use href="#code"/></svg>
<div class="ct" style="left:752.5px;top:958px;color:#7038e0">Claude Code Integration</div>
<div class="t" style="left:728px;top:1005px;font-family:'Liberation Mono',monospace;font-size:12.25px;color:#d63384">ANTHROPIC_BASE_URL=http://&lt;server&gt;:8002</div>
<div class="t" style="left:728px;top:1044.5px;font-weight:700;font-size:14px">Enabled Profiles</div>
<div class="ab" style="left:728px;top:1074px;width:603px;height:42px;border:1px solid #198754;border-radius:6px;background:#e7f3ed"></div>
<svg class="ab" style="left:737px;top:1086px;color:#198754" width="16" height="16"><use href="#check"/></svg>
<div class="t" style="left:761.4px;top:1083.5px;color:#212529"><b>11</b> Enabled Profiles</div>
<div class="ab" style="left:1265px;top:1085px;width:58px;height:20px;border:1px solid #198754;border-radius:4px;color:#198754;font-size:12.25px;line-height:18px;white-space:nowrap;padding-left:8px"><svg width="12.25" height="12.25"><use href="#pencil"/></svg> Edit</div>
<svg class="ab g" style="left:728px;top:1129px" width="14" height="14"><use href="#plusc"/></svg>
<div class="t g" style="left:746px;top:1125.5px">Manage / Create Profiles</div>
<svg class="ab g" style="left:729px;top:1168px" width="16" height="16"><use href="#chevr"/></svg>
<div class="t g h" style="left:749.7px;top:1165.5px;font-size:16px">Fallback Settings</div>
<div class="t g h" style="left:889px;top:1167px;font-size:12px">lbl.fallback_note</div>

<!-- System -->
<div class="card" style="left:52px;top:1277px;width:636px;height:340.5px"><div class="hd" style="height:44px;background:#fff8e6"></div></div>
<svg class="ti" style="left:68px;top:1289.2px;color:#664d03"><use href="#gear"/></svg>
<div class="ct" style="left:92.5px;top:1289.5px;color:#664d03">System</div>
<div class="t" style="left:68px;top:1338px">Token Price (€ / token) <span style="font-size:12.25px;color:#6c757d">— z.B. 0.00002 = €20 / 1 Mio. Tokens</span></div>
<div class="i" style="left:68px;top:1368.4px;width:603px;height:35.5px;line-height:32px;padding-left:12px">0,00002</div>
<div class="t" style="left:68px;top:1421px">Log Level</div>
<div class="dd" style="left:68px;top:1451px;width:603px">INFO</div>
<div class="t" style="left:68px;top:1499.5px">Ollama API Key</div>
<div class="i m" style="left:68px;top:1529.5px;width:603px;height:34px;line-height:31px;padding-left:12px;color:#343a40">ollama</div>

<!-- Email -->
<div class="card" style="left:712px;top:1277px;width:636px;height:340.5px"><div class="hd" style="height:44px;background:#e3f7fc"></div></div>
<svg class="ti" style="left:728px;top:1289.2px;color:#055160"><use href="#env"/></svg>
<div class="ct" style="left:752.5px;top:1289.5px;color:#055160">E-Mail / SMTP</div>
<div class="t" style="left:728px;top:1338px">SMTP Host</div>
<div class="t" style="left:1136px;top:1338px">Port</div>
<div class="blk" style="left:724px;top:1363px;width:409px;height:41px"></div>
<div class="i" style="left:1136px;top:1368px;width:94px;height:32px;line-height:29px;padding-left:8.5px">465</div>
<div class="ab" style="left:1238.3px;top:1341px;width:16px;height:16px;border:1px solid #dee2e6;border-radius:4px;background:#fff"></div>
<div class="t" style="left:1262.7px;top:1338px;color:#343a40">STARTTLS</div>
<div class="cb2 ab" style="left:1238.3px;top:1371px;width:16px;height:16px;background:#0d6efd;border-radius:4px"><svg><use href="#tick"/></svg></div>
<div class="t" style="left:1262.7px;top:1366.5px;color:#343a40">SSL/TLS</div>
<div class="t h" style="left:1262.7px;top:1387.5px;color:#343a40">(Port 465)</div>
<div class="t" style="left:728px;top:1425px">Username</div>
<div class="t" style="left:1034px;top:1425px">Password</div>
<div class="blk" style="left:724px;top:1450px;width:613px;height:41px"></div>
<div class="t" style="left:728px;top:1496.5px">Sender (From)</div>
<div class="blk" style="left:724px;top:1521px;width:307px;height:41px"></div>
<div class="i g" style="left:728px;top:1569px;width:260px;height:32px;line-height:29px;padding-left:8.5px">Test recipient email</div>
<div class="btn" style="left:996px;top:1570px;width:147px;border-color:#0dcaf0;color:#0dcaf0"><svg class="ab" style="left:8px;top:7px" width="14" height="14"><use href="#send"/></svg><span class="ab" style="left:26px;top:0">Send Test Email</span></div>

<!-- Public URLs -->
<div class="card" style="left:52px;top:1641px;width:1296px;height:234.5px"><div class="hd" style="height:43px;background:#e8f2ec"></div></div>
<svg class="ti" style="left:68px;top:1652.6px;color:#0a3622"><use href="#globe"/></svg>
<div class="ct" style="left:92.5px;top:1652.4px;color:#0a3622">Public URLs</div>
<div class="t g h" style="left:205.8px;top:1653px;font-size:12.6px;letter-spacing:.36px">Displayed in the user portal and used in emails</div>
<div class="t" style="left:68px;top:1701.5px">User Portal</div>
<div class="t" style="left:492px;top:1701.5px">Admin Backend</div>
<div class="t" style="left:916px;top:1701.5px">Public API</div>
<div class="blk" style="left:64px;top:1727px;width:1273px;height:40px"></div>
<div class="t" style="left:68px;top:1772.5px">Log Viewer URL (external)</div>
<div class="t" style="left:704px;top:1772.5px">Prometheus URL (external)</div>
<div class="i m g" style="left:68px;top:1802.5px;width:627.5px;height:31px;line-height:28px;padding-left:8px">https://logs.example.com</div>
<div class="i m g" style="left:704px;top:1802.5px;width:627px;height:31px;line-height:28px;padding-left:8px">https://metrics.example.com</div>
<div class="t g h" style="left:68px;top:1837.5px">External URL of the Dozzle log viewer (terminated by Nginx proxy)</div>
<div class="t g h" style="left:704px;top:1837.5px">External URL for Prometheus access (terminated by Nginx proxy)</div>

<!-- SSO -->
<div class="card" style="left:52px;top:1899px;width:1296px;height:492px"><div class="hd" style="height:42.5px;background:#e2f6fc"></div></div>
<svg class="ti" style="left:68px;top:1910.2px;color:#055160"><use href="#badge"/></svg>
<div class="ct" style="left:92.5px;top:1910.5px;color:#055160">SSO / OIDC (Authentik)</div>
<svg class="ch" style="top:1911.5px;color:#055160"><use href="#chevd"/></svg>
<div class="t h" style="left:68px;top:1959.5px">Authentik URL (SSO base URL)</div>
<div class="t h" style="left:704px;top:1959.5px">Client ID</div>
<div class="i m" style="left:68px;top:1989.3px;width:627.5px;height:31px;line-height:28px;padding-left:8px;color:#343a40">http://authentik-server:9000</div>
<div class="i m" style="left:704px;top:1989.3px;width:627px;height:31px;line-height:28px;padding-left:8px;color:#343a40">moe-infra</div>
<div class="t" style="left:68px;top:2030.5px">Client Secret</div>
<div class="t" style="left:704px;top:2030.5px">JWKS URL (backend JWT validation)</div>
<div class="i m" style="left:68px;top:2060.4px;width:627.5px;height:30.5px;line-height:28px;padding-left:8px;color:#343a40">••••••••</div>
<div class="i m" style="left:704px;top:2060.4px;width:627px;height:30.5px;line-height:28px;padding-left:8px;color:#343a40">http://authentik-server:9000/application/o/moe-sovereign/jwks/</div>
<div class="t h" style="left:68px;top:2100.5px">Issuer URL</div>
<div class="i m" style="left:68px;top:2131.4px;width:627.5px;height:31px;line-height:28px;padding-left:8px;color:#343a40">http://authentik-server:9000/application/o/moe-sovereign/</div>
<div class="t" style="left:68px;top:2171.5px">End Session URL (logout redirect)</div>
<div class="i m g" style="left:68px;top:2201.3px;width:1263px;height:31.5px;line-height:28px;padding-left:8px">http://authentik-server:9000/application/o/…/end-session/</div>
<div class="t g h" style="left:68px;top:2236.5px">Where to redirect after logout. Leave empty to return to the login page.</div>
<div class="t h" style="left:68px;top:2267.5px">Public Authentik URL (browser redirect)</div>
<div class="i m" style="left:68px;top:2297px;width:1263px;height:32px;line-height:29px;padding-left:8px;color:#343a40">https://sso.moe-sovereign.org</div>
<div class="t g h" style="left:68px;top:2332.5px">Optional. If Authentik is only reachable internally via container name, enter the public DNS URL here (e.g. https://authentik.example.com). The login button will use this URL for the</div>
<div class="t g h" style="left:68px;top:2353.5px">browser redirect. Leave empty if AUTHENTIK_URL is already publicly accessible.</div>

<!-- CORS -->
<div class="card" style="left:52px;top:2415px;width:1296px;height:46px"><div class="hd" style="height:43px;background:#fff8e6"></div></div>
<svg class="ti" style="left:68px;top:2426.9px;color:#664d03"><use href="#shield"/></svg>
<div class="ct" style="left:92.5px;top:2426.5px;color:#664d03">CORS Configuration (Open WebUI direct connections)</div>
<svg class="ch" style="top:2427px;color:#664d03"><use href="#chevd"/></svg>

<!-- Advanced -->
<div class="card" style="left:52px;top:2482px;width:1296px;height:45px"><div class="hd" style="height:43px;background:#f0f1f3"></div></div>
<svg class="ti" style="left:68px;top:2493.2px;color:#6c757d"><use href="#sl2"/></svg>
<div class="ct" style="left:92.5px;top:2494px;color:#6c757d">Advanced Pipeline Settings</div>
<svg class="ch" style="top:2494px;color:#6c757d"><use href="#chevd"/></svg>

<!-- Actions -->
<div class="ab" style="left:954px;top:2549px;width:90px;height:38px;background:#6c757d;border-radius:6px;color:#fff;font-size:16px;line-height:38px"><svg class="ab" style="left:14px;top:11px" width="16" height="16"><use href="#reset"/></svg><span class="ab" style="left:33px;top:0">Reset</span></div>
<div class="ab" style="left:1052px;top:2549px;width:296px;height:38px;background:#0d6efd;border-radius:6px;color:#fff;font-size:16px;line-height:38px;white-space:nowrap"><svg class="ab" style="left:25px;top:11px" width="16" height="16"><use href="#floppy"/></svg><span class="ab" style="left:45.5px;top:0">Save &amp; Restart Orchestrator</span></div>

<div class="t h" style="left:0;width:1400px;text-align:center;top:2633.5px;font-size:12.25px;color:#adb5bd">Sovereign MoE Orchestrator — Admin UI</div>
</body></html>
